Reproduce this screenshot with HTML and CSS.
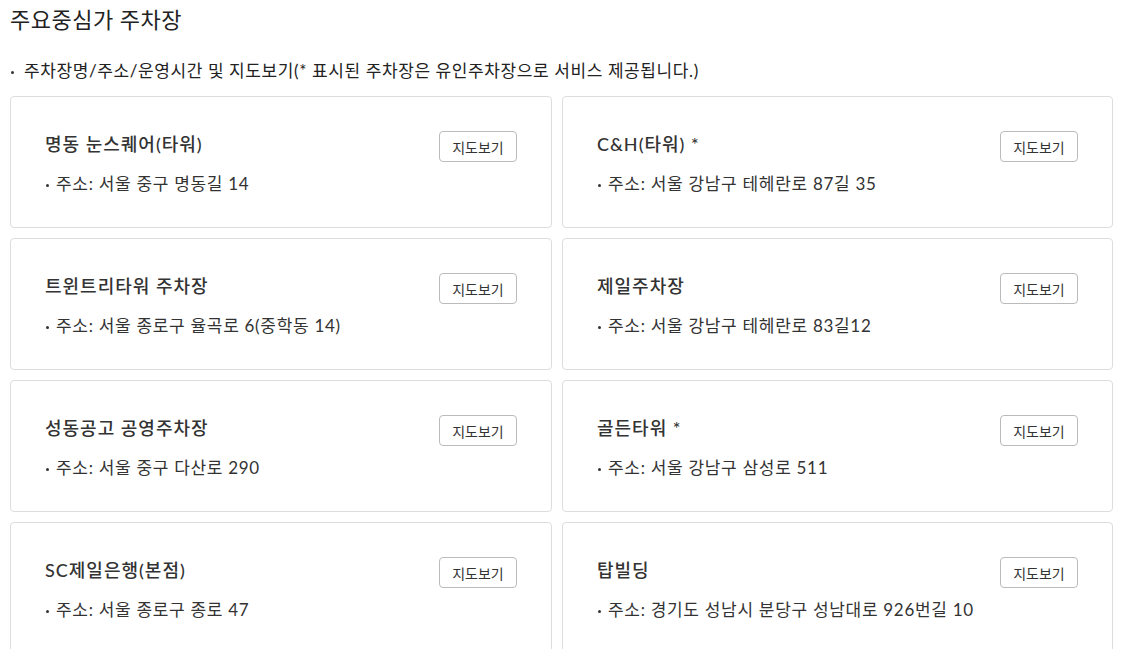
FILE: index.html
```html
<!DOCTYPE html>
<html lang="ko">
<head>
    <meta charset="UTF-8">
    <meta name="viewport" content="width=device-width, initial-scale=1.0">
    <title>주요중심가 주차장</title>
    <link rel="stylesheet" href="styles.css">
</head>
<body>
    <div class="parking">
        <h2 class="parking-title">주요중심가 주차장</h2>
        <p class="parking-desc">주차장명/주소/운영시간 및 지도보기(* 표시된 주차장은 유인주차장으로 서비스 제공됩니다.)</p>

        <div class="lot-list">
            <div class="lot">
                <div class="lot-head">
                    <strong class="lot-name">명동 눈스퀘어(타워)</strong>
                    <button class="map-button">지도보기</button>
                </div>
                <p class="lot-addr">주소: 서울 중구 명동길 14</p>
            </div>
            <div class="lot">
                <div class="lot-head">
                    <strong class="lot-name">C&amp;H(타워) *</strong>
                    <button class="map-button">지도보기</button>
                </div>
                <p class="lot-addr">주소: 서울 강남구 테헤란로 87길 35</p>
            </div>
            <div class="lot">
                <div class="lot-head">
                    <strong class="lot-name">트윈트리타워 주차장</strong>
                    <button class="map-button">지도보기</button>
                </div>
                <p class="lot-addr">주소: 서울 종로구 율곡로 6(중학동 14)</p>
            </div>
            <div class="lot">
                <div class="lot-head">
                    <strong class="lot-name">제일주차장</strong>
                    <button class="map-button">지도보기</button>
                </div>
                <p class="lot-addr">주소: 서울 강남구 테헤란로 83길12</p>
            </div>
            <div class="lot">
                <div class="lot-head">
                    <strong class="lot-name">성동공고 공영주차장</strong>
                    <button class="map-button">지도보기</button>
                </div>
                <p class="lot-addr">주소: 서울 중구 다산로 290</p>
            </div>
            <div class="lot">
                <div class="lot-head">
                    <strong class="lot-name">골든타워 *</strong>
                    <button class="map-button">지도보기</button>
                </div>
                <p class="lot-addr">주소: 서울 강남구 삼성로 511</p>
            </div>
            <div class="lot">
                <div class="lot-head">
                    <strong class="lot-name">SC제일은행(본점)</strong>
                    <button class="map-button">지도보기</button>
                </div>
                <p class="lot-addr">주소: 서울 종로구 종로 47</p>
            </div>
            <div class="lot">
                <div class="lot-head">
                    <strong class="lot-name">탑빌딩</strong>
                    <button class="map-button">지도보기</button>
                </div>
                <p class="lot-addr">주소: 경기도 성남시 분당구 성남대로 926번길 10</p>
            </div>
        </div>
    </div>
</body>
</html>
```

FILE: styles.css
```css
body {
    margin: 0;
    background-color: #fff;
    color: #333;
    font-family: Lato, "Noto Sans CJK KR", sans-serif;
}

.parking {
    padding: 0 10px;
}

.parking-title {
    margin: 0;
    padding-top: 6px;
    font-size: 22px;
    font-weight: 400;
    letter-spacing: 0.5px;
    line-height: 28px;
    color: #222;
}

.parking-desc {
    position: relative;
    margin: 0;
    padding: 25px 0 0 14px;
    font-size: 17px;
    letter-spacing: 0.6px;
    line-height: 24px;
    color: #222;
}

.parking-desc::before,
.lot-addr::before {
    content: "";
    position: absolute;
    left: 1px;
    width: 3px;
    height: 3px;
    border-radius: 50%;
    background-color: #333;
}

.parking-desc::before {
    top: 37px;
}

.lot-list {
    display: grid;
    grid-template-columns: 542px 551px;
    grid-auto-rows: 132px;
    gap: 10px;
    margin-top: 13px;
}

.lot {
    border: 1px solid #ddd;
    border-radius: 4px;
    padding: 34px 34px 0 34px;
}

.lot-head {
    display: flex;
    justify-content: space-between;
    align-items: center;
    height: 31px;
}

.lot-name {
    margin-bottom: 8px;
    font-size: 18px;
    font-weight: 500;
    letter-spacing: 1px;
    color: #333;
}

.map-button {
    width: 78px;
    height: 31px;
    padding: 0;
    border: 1px solid #bbb;
    border-radius: 4px;
    background-color: #fff;
    color: #333;
    font-family: inherit;
    font-size: 14px;
}

.lot-addr {
    position: relative;
    margin: 9px 0 0;
    padding-left: 11px;
    font-size: 17px;
    letter-spacing: 0.7px;
    line-height: 26px;
}

.lot-addr::before {
    top: 13px;
}
```
